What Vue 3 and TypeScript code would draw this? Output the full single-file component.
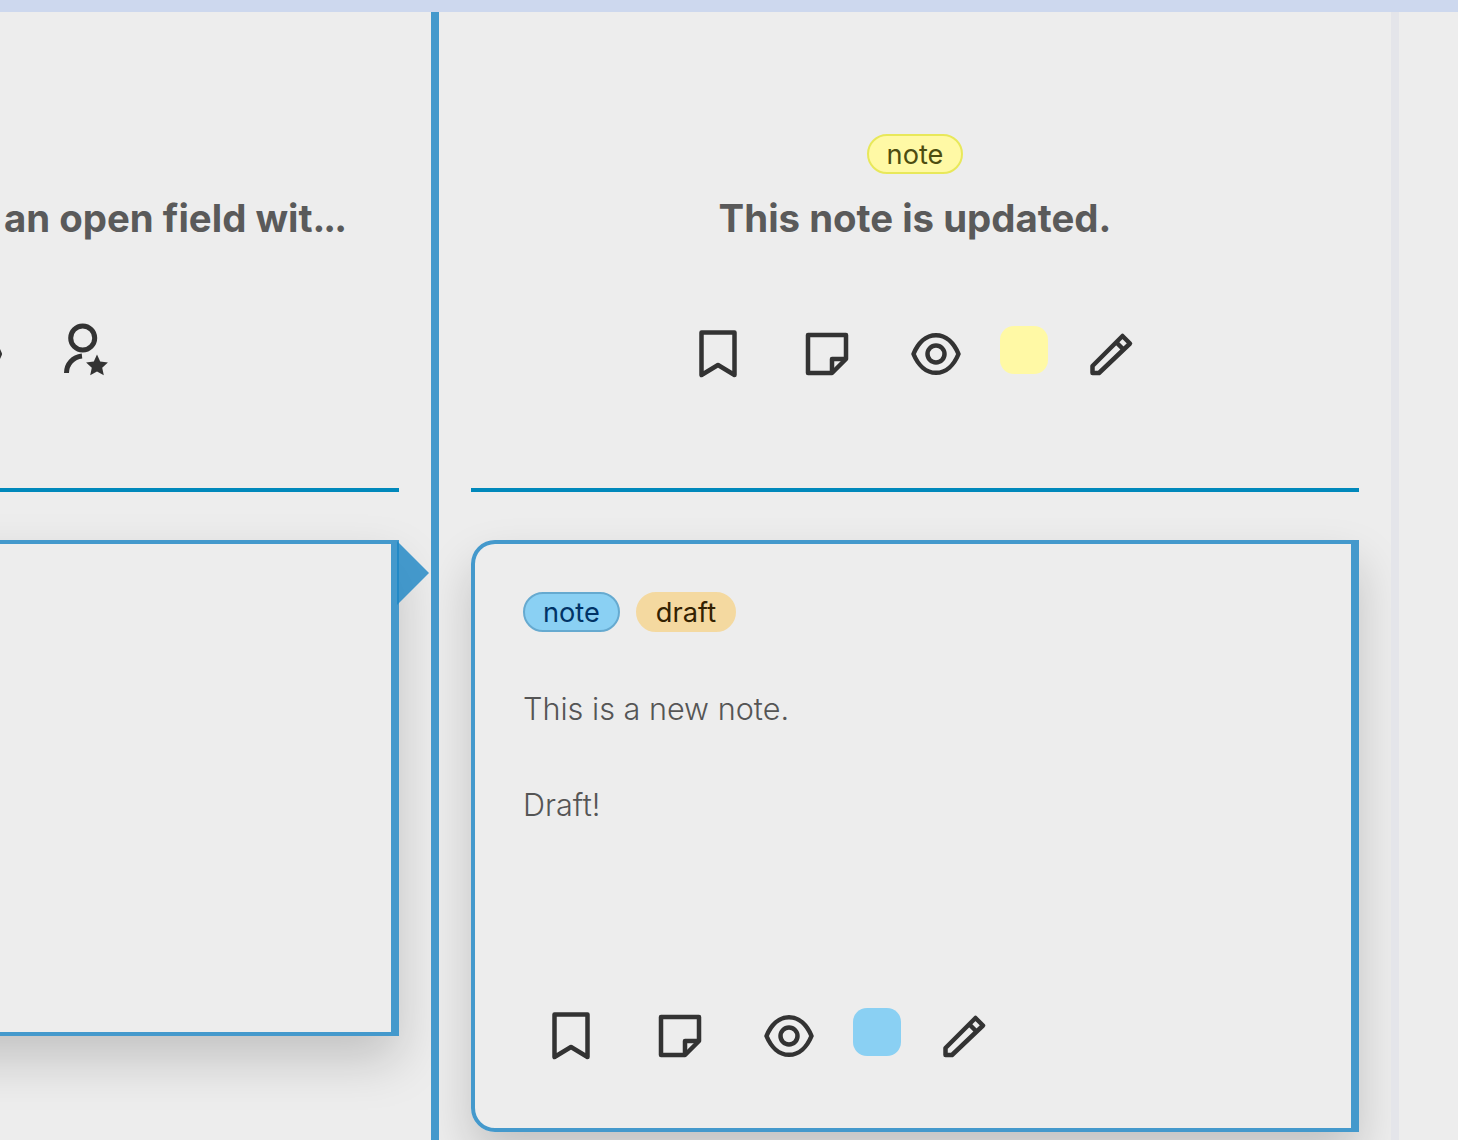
<script setup lang="ts">
interface Glyph {
  name: string
  d: string[]
  star?: string
}

const bookmark: Glyph = { name: 'bookmark', d: ['M7.5 2.5H40.5V45L24 35L7.5 45Z'] }
const note: Glyph = { name: 'note', d: ['M5 5H43V29L29 43H5Z', 'M29 43V29H43'] }
const eye: Glyph = {
  name: 'eye',
  d: [
    'M1.5 24C6 13 14 5.2 24 5.2S42 13 46.5 24C42 35 34 42.8 24 42.8S6 35 1.5 24Z',
    'M24 15.5A8.5 8.5 0 1 1 24 32.5A8.5 8.5 0 1 1 24 15.5Z'
  ]
}
const pencil: Glyph = { name: 'pencil', d: ['M6.5 43V36L36.5 6L44 13.5L13 43Z', 'M30.5 12.5L38 20'] }
const userStar: Glyph = {
  name: 'user-star',
  d: ['M21.7 -4A12 12 0 1 1 21.7 20A12 12 0 1 1 21.7 -4Z', 'M5.5 43C5.5 34 12 27 21 26'],
  star: 'M36 24.5L39.2 31.6L46.9 32.4L41.2 37.7L42.8 45.3L36 41.5L29.2 45.3L30.8 37.7L25.1 32.4L32.8 31.6Z'
}

const cardChips = [
  { label: 'note', kind: 'blue' },
  { label: 'draft', kind: 'sand' }
]
</script>

<template>
  <div class="topbar" />
  <main class="board">
    <section class="column">
      <header class="head no-chip">
        <h2 class="title clipped">A lone hiker crossing an open field wit<span class="dots">...</span></h2>
        <div class="actions offset">
          <button v-for="icon in [note, eye, userStar]" :key="icon.name" class="icon-btn" type="button" :aria-label="icon.name">
            <svg viewBox="0 0 48 48" width="48" height="48">
              <path v-for="d in icon.d" :key="d" :d="d" />
              <path v-if="icon.star" class="solid" :d="icon.star" />
            </svg>
          </button>
        </div>
      </header>
      <hr class="rule" />
      <article class="card selected">
        <span class="pointer" />
      </article>
    </section>

    <section class="column">
      <header class="head">
        <span class="chip yellow">note</span>
        <h2 class="title">This note is updated.</h2>
        <div class="actions">
          <button v-for="icon in [bookmark, note, eye]" :key="icon.name" class="icon-btn" type="button" :aria-label="icon.name">
            <svg viewBox="0 0 48 48" width="48" height="48">
              <path v-for="d in icon.d" :key="d" :d="d" />
            </svg>
          </button>
          <span class="swatch yellow-swatch" />
          <button class="icon-btn last" type="button" aria-label="pencil">
            <svg viewBox="0 0 48 48" width="48" height="48">
              <path v-for="d in pencil.d" :key="d" :d="d" />
            </svg>
          </button>
        </div>
      </header>
      <hr class="rule" />
      <article class="card open">
        <div class="chips">
          <span v-for="chip in cardChips" :key="chip.label" class="chip" :class="chip.kind">{{ chip.label }}</span>
        </div>
        <p class="body-text">This is a new note.</p>
        <p class="body-text">Draft!</p>
        <div class="actions card-actions">
          <button v-for="icon in [bookmark, note, eye]" :key="icon.name" class="icon-btn" type="button" :aria-label="icon.name">
            <svg viewBox="0 0 48 48" width="48" height="48">
              <path v-for="d in icon.d" :key="d" :d="d" />
            </svg>
          </button>
          <span class="swatch blue-swatch" />
          <button class="icon-btn last" type="button" aria-label="pencil">
            <svg viewBox="0 0 48 48" width="48" height="48">
              <path v-for="d in pencil.d" :key="d" :d="d" />
            </svg>
          </button>
        </div>
      </article>
    </section>
  </main>
</template>

<style>
html,
body {
  margin: 0;
  height: 100%;
  overflow: hidden;
  background: #ededed;
}
</style>

<style scoped>
.topbar {
  height: 12px;
  background: #cdd8ee;
}

.board {
  display: flex;
  height: 1128px;
  margin-left: -521px;
  font-family: Inter, "Liberation Sans", sans-serif;
}

.column {
  flex: none;
  box-sizing: border-box;
  width: 960px;
  padding: 0 32px;
  overflow: hidden;
  border-right: 8px solid #4499cc;
}

.column + .column {
  border-right-color: #e4e5ea;
}

.head {
  display: flex;
  flex-direction: column;
  align-items: center;
  padding-top: 122px;
}

.no-chip {
  padding-top: 162px;
}

.chip {
  display: inline-block;
  box-sizing: border-box;
  height: 40px;
  padding: 0 18px;
  border: 2px solid transparent;
  border-radius: 20px;
  font-size: 27.2px;
  line-height: 37px;
}

.yellow {
  background: #fff9a5;
  border-color: #e8e85a;
  color: #4d4d10;
}

.blue {
  background: #8ad0f3;
  border-color: #66aad0;
  color: #003366;
}

.sand {
  background: #f4d9a0;
  border-color: #f4d9a0;
  color: #332200;
}

.title {
  width: 100%;
  margin: 20px 0 0;
  color: #5a5a5a;
  font-size: 38.4px;
  font-weight: 700;
  line-height: 48px;
  text-align: center;
  white-space: nowrap;
}

.clipped {
  box-sizing: border-box;
  padding-right: 54px;
  text-align: right;
}

.dots {
  letter-spacing: -2px;
}

.actions {
  display: flex;
  align-items: flex-start;
  margin-top: 84px;
}

.offset {
  padding-left: 43px;
}

.icon-btn {
  flex: none;
  box-sizing: border-box;
  width: 48px;
  height: 52px;
  margin-right: 61px;
  padding: 4px 0 0;
  border: 0;
  background: none;
}

.icon-btn:nth-of-type(3) {
  margin-right: 40px;
}

.offset .icon-btn:nth-of-type(2) {
  margin-right: 60px;
}

.offset .icon-btn:nth-of-type(3) {
  margin-right: 0;
}

.last {
  margin-right: 2px;
}

.icon-btn svg {
  display: block;
  overflow: visible;
  fill: none;
  stroke: #333333;
  stroke-width: 4.5;
  stroke-linejoin: round;
}

.offset .icon-btn svg {
  stroke-width: 5;
}

.icon-btn .solid {
  fill: #333333;
  stroke: none;
}

.swatch {
  flex: none;
  width: 48px;
  height: 48px;
  margin-right: 38px;
  border-radius: 14px;
}

.yellow-swatch {
  background: #fff9a5;
}

.blue-swatch {
  background: #8ad0f3;
}

.rule {
  height: 4px;
  margin: 110px 0 48px;
  border: 0;
  background: #0088bb;
}

.card {
  position: relative;
  box-sizing: border-box;
  border-style: solid;
  border-color: #4499cc;
  border-width: 4px 8px 4px 4px;
  box-shadow: 0 24px 48px rgba(0, 0, 0, 0.18);
}

.selected {
  height: 496px;
}

.pointer {
  position: absolute;
  top: -3px;
  right: -38px;
  width: 32px;
  height: 64px;
  background: rgba(26, 132, 196, 0.8);
  clip-path: polygon(0 0, 100% 50%, 0 100%);
}

.open {
  display: flex;
  flex-direction: column;
  height: 592px;
  padding: 48px;
  border-radius: 24px 0 0 24px;
}

.chips {
  display: flex;
  gap: 16px;
}

.body-text {
  margin: 48px 0 0;
  color: #555555;
  font-size: 30.6px;
  font-weight: 300;
  line-height: 48px;
}

.chips + .body-text {
  margin-top: 53px;
}

.card-actions {
  margin-top: auto;
  padding: 0 0 20px 24px;
}
</style>
